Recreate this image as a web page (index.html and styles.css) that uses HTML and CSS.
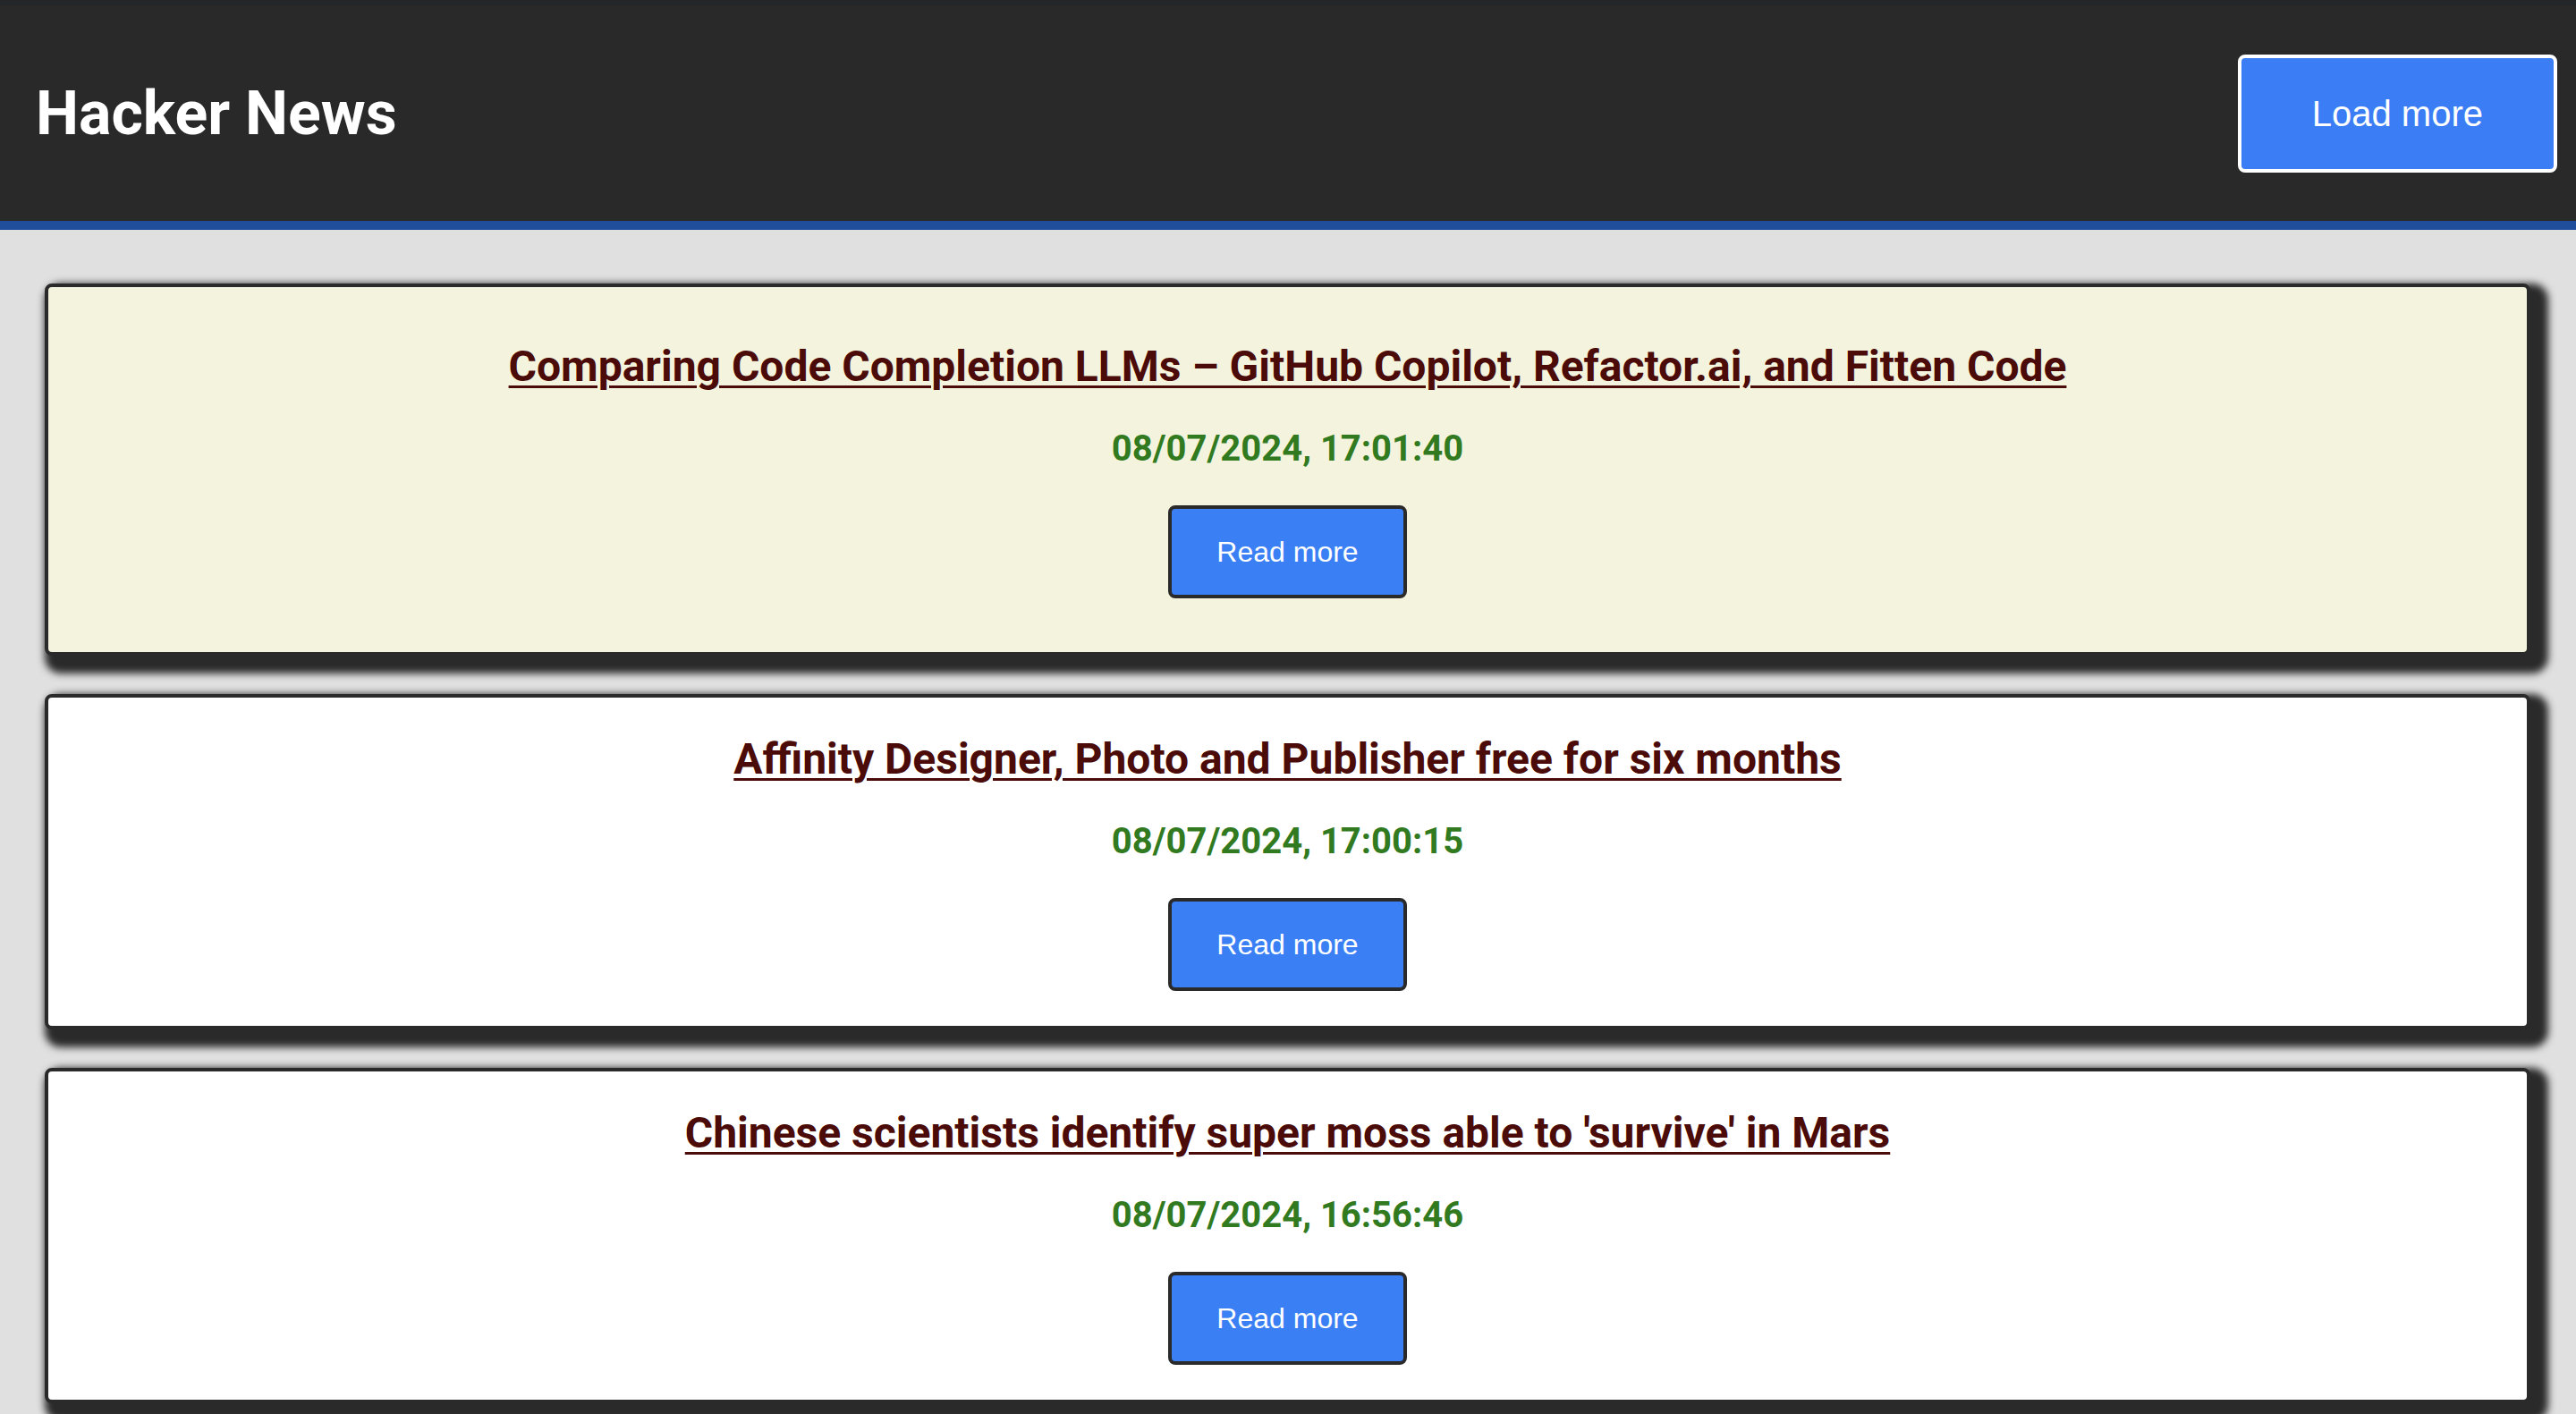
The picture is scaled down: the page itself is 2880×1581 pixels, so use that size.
FILE: index.html
```html
<!DOCTYPE html>
<html lang="en">
<head>
<meta charset="utf-8">
<title>Hacker News</title>
<link rel="stylesheet" href="styles.css">
</head>
<body>
<header class="topbar">
  <h1 class="brand">Hacker News</h1>
  <button class="load-btn">Load more</button>
</header>
<main class="feed">
  <article class="card card--featured">
    <h2 class="card-title"><a href="#">Comparing Code Completion LLMs – GitHub Copilot, Refactor.ai, and Fitten Code</a></h2>
    <p class="card-date">08/07/2024, 17:01:40</p>
    <button class="read-btn">Read more</button>
  </article>
  <article class="card">
    <h2 class="card-title"><a href="#">Affinity Designer, Photo and Publisher free for six months</a></h2>
    <p class="card-date">08/07/2024, 17:00:15</p>
    <button class="read-btn">Read more</button>
  </article>
  <article class="card">
    <h2 class="card-title"><a href="#">Chinese scientists identify super moss able to 'survive' in Mars</a></h2>
    <p class="card-date">08/07/2024, 16:56:46</p>
    <button class="read-btn">Read more</button>
  </article>
</main>
</body>
</html>
```
FILE: styles.css
```css
* { box-sizing: border-box; }

html, body {
  margin: 0;
  padding: 0;
}

body {
  background: #e0e0e0;
  font-family: Roboto, "Liberation Sans", Arial, sans-serif;
}

.topbar {
  display: flex;
  align-items: center;
  justify-content: space-between;
  height: 257px;
  padding: 0 21px 0 40px;
  background: #292929;
  border-top: 6px solid #23272a;
  border-bottom: 10px solid #214e9a;
}

.brand {
  margin: 0;
  color: #ffffff;
  font-family: Roboto, "Liberation Sans", sans-serif;
  font-weight: 700;
  font-size: 68px;
  line-height: 1;
}

.load-btn {
  margin: 0;
  padding: 38px 79px;
  background: #3b7df5;
  color: #ffffff;
  border: 4px solid #ffffff;
  border-radius: 8px;
  font-family: "Liberation Sans", Arial, sans-serif;
  font-size: 40px;
  line-height: 48px;
  cursor: pointer;
}

.feed {
  display: flex;
  flex-direction: column;
  gap: 43px;
  padding: 60px 51px 40px 50px;
}

.card {
  display: flex;
  flex-direction: column;
  align-items: center;
  text-align: center;
  padding: 41px 20px 39px;
  background: #ffffff;
  border: 4px solid #2a2a2a;
  border-radius: 8px;
  box-shadow: 10px 10px 8px 10px #2a2a2a;
}

.card--featured {
  background: #f4f4de;
  padding: 61px 20px 60px;
}

.card-title {
  margin: 0 0 40px;
  font-family: Roboto, "Liberation Sans", sans-serif;
  font-weight: 700;
  font-size: 48px;
  line-height: 56px;
}

.card-title a {
  color: #4b0b08;
  text-decoration: underline;
  text-decoration-thickness: 3px;
  text-underline-offset: 5px;
}

.card-date {
  margin: 0 0 40px;
  color: #327a1f;
  font-family: Roboto, "Liberation Sans", sans-serif;
  font-weight: 700;
  font-size: 40px;
  line-height: 47px;
}

.read-btn {
  padding: 30px 50px;
  background: #3b7ff5;
  color: #ffffff;
  border: 4px solid #2a2a2a;
  border-radius: 8px;
  font-family: "Liberation Sans", Arial, sans-serif;
  font-size: 32px;
  line-height: 36px;
  cursor: pointer;
}
```
